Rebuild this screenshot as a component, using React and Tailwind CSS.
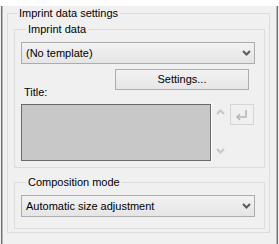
import React from 'react';

const font = { fontFamily: '"Liberation Sans", Arial, sans-serif' };

function Chevron({ className = '' }) {
  return (
    <svg width="9" height="6" viewBox="0 0 9 6" className={className}>
      <polyline points="1,1 4.5,4.5 8,1" fill="none" stroke="#5a5a5a" strokeWidth="2" />
    </svg>
  );
}

function Combo({ label }) {
  return (
    <div className="flex items-center justify-between w-[234px] h-[22px] border border-[#acacac] bg-gradient-to-b from-[#f2f2f2] to-[#e5e5e5] pl-[4px] pr-[3px] text-black">
      <span>{label}</span>
      <Chevron />
    </div>
  );
}

function Group({ title, className = '', legendClass = 'ml-[5px]', children }) {
  return (
    <fieldset className={`border border-[#dcdcdc] ${className}`}>
      <legend className={`${legendClass} px-[2px] leading-[14px] text-black`}>{title}</legend>
      {children}
    </fieldset>
  );
}

export default function App() {
  return (
    <div className="w-[279px] h-[244px] bg-[#f0f0f0] pl-px text-[11px]" style={font}>
      <div className="w-[277px] h-[242px] border-x border-b border-[#6f6f6f] shadow-[inset_1px_0_#b8b8b8,inset_-1px_-1px_#b8b8b8]">
        {/* Imprint data settings */}
        <Group
          title="Imprint data settings"
          legendClass="ml-[3px]"
          className="ml-[5px] mt-[6px] w-[263px] h-[227px] pl-[6px] pt-[2px]"
        >
          {/* Imprint data */}
          <Group title="Imprint data" className="w-[251px] h-[146px] pl-[6px] pt-[6px]">
            <Combo label="(No template)" />
            <button className="mt-[5px] ml-[94px] w-[134px] h-[21px] border border-[#adadad] bg-gradient-to-b from-[#f2f2f2] to-[#e6e6e6] text-black">
              Settings...
            </button>
            <div className="ml-[3px] mt-[-4px] leading-[13px]">Title:</div>
            <div className="flex mt-[5px]">
              <div className="w-[190px] h-[57px] border border-[#6a6a6a] bg-[#c8c8c8]" />
              <div className="w-[18px] h-[59px] mt-[-2px] border-l border-white flex flex-col items-center justify-between py-[7px]">
                <svg width="9" height="6" viewBox="0 0 9 6">
                  <polyline points="1,5 4.5,1.5 8,5" fill="none" stroke="#c6c6c6" strokeWidth="2" />
                </svg>
                <svg width="9" height="6" viewBox="0 0 9 6">
                  <polyline points="1,1 4.5,4.5 8,1" fill="none" stroke="#c6c6c6" strokeWidth="2" />
                </svg>
              </div>
              <div className="ml-[1px] w-[24px] h-[21px] border border-[#d5d5d5] flex items-center justify-center">
                <svg width="14" height="12" viewBox="0 0 14 12">
                  <polyline points="11,1 11,8 2,8" fill="none" stroke="#b4b4b4" strokeWidth="1.5" />
                  <polyline points="5,5 2,8 5,11" fill="none" stroke="#b4b4b4" strokeWidth="1.5" />
                </svg>
              </div>
            </div>
          </Group>
          {/* Composition mode */}
          <Group title="Composition mode" className="mt-[7px] w-[251px] h-[54px] pl-[6px] pt-[6px]">
            <Combo label="Automatic size adjustment" />
          </Group>
        </Group>
      </div>
    </div>
  );
}
